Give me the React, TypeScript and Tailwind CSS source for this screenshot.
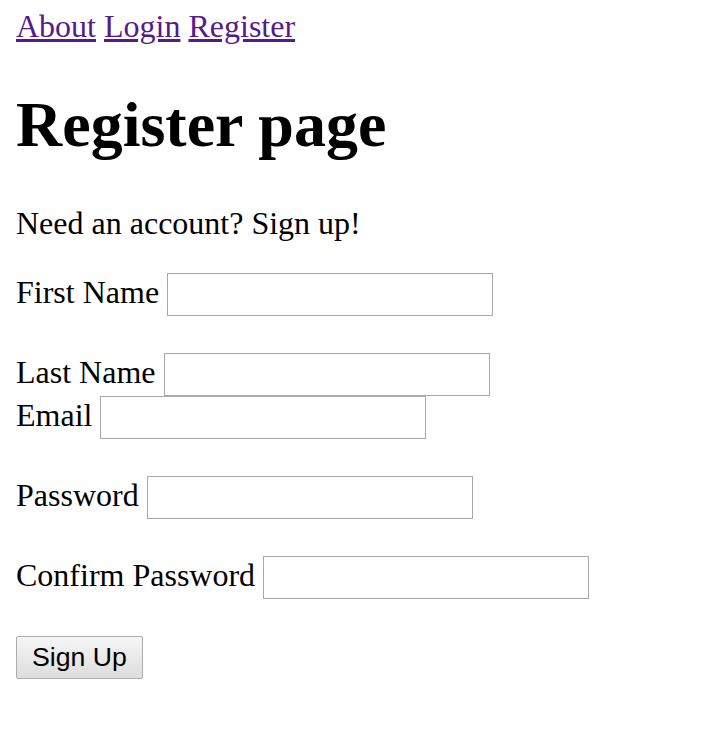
export default function App() {
  const field = (label: string, type = "text") => (
    <div className="flex h-[43px] items-start gap-2">
      <label className="mt-px whitespace-nowrap">{label}</label>
      <input
        type={type}
        className="h-[43px] w-[326px] border border-[#a9a9a9] bg-white outline-none"
      />
    </div>
  );
  const gap = <div className="h-[37px]" />;

  return (
    <div className="min-h-screen bg-white px-4 pt-2 font-['Liberation_Serif',serif] text-[32px] leading-[normal] text-black">
      <div>
        <a href="#" className="text-[#551a8b] underline">About</a>{" "}
        <a href="#" className="text-[#551a8b] underline">Login</a>{" "}
        <a href="#" className="text-[#551a8b] underline">Register</a>
      </div>
      <h1 className="my-[43px] text-[64px] font-bold leading-[normal]">Register page</h1>
      <p className="mb-[31px]">Need an account? Sign up!</p>
      <form onSubmit={(e) => e.preventDefault()}>
        {field("First Name")}
        {gap}
        {field("Last Name")}
        {field("Email", "email")}
        {gap}
        {field("Password", "password")}
        {gap}
        {field("Confirm Password", "password")}
        {gap}
        <button
          type="submit"
          className="h-[43px] w-[127px] rounded-[2px] border border-[#adadad] bg-linear-to-b from-[#f6f6f6] to-[#dddddd] font-['Liberation_Sans',Arial,sans-serif] text-[26.67px] leading-none text-black"
        >
          Sign Up
        </button>
      </form>
    </div>
  );
}
